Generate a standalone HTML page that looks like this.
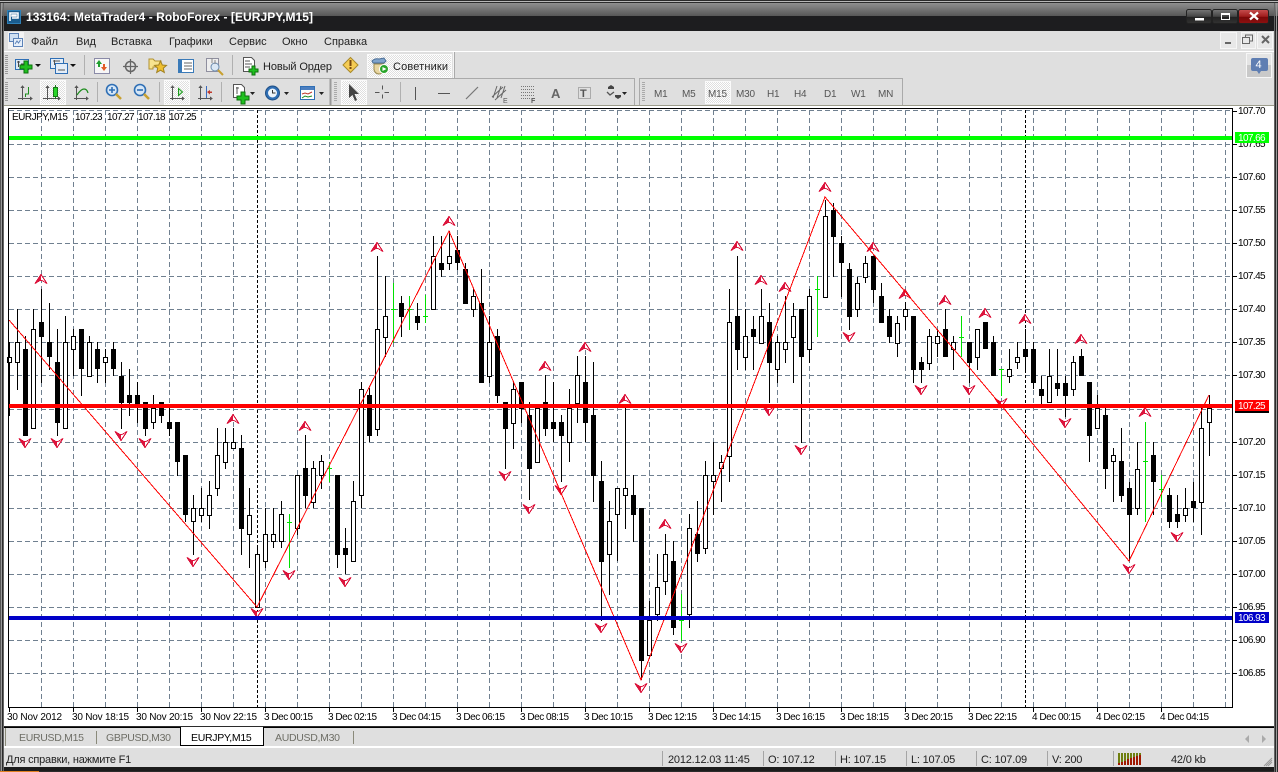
<!DOCTYPE html>
<html><head><meta charset="utf-8"><title>MetaTrader4</title>
<style>
html,body{margin:0;padding:0;background:#222;width:1278px;height:772px;overflow:hidden}
svg{position:absolute;left:0;top:0;display:block}
text{font-family:"Liberation Sans","Noto Sans CJK SC",sans-serif;white-space:pre}
.m{font-size:11px;fill:#222}
.p{font-size:10px;fill:#000;letter-spacing:-.6px}
.t{font-size:10px;fill:#000;letter-spacing:-.1px}
.tab{font-size:10.5px;fill:#6e6e66;letter-spacing:-.3px}
.s{font-size:11px;fill:#222;letter-spacing:-.2px}
.tf{font-size:10px;fill:#555;letter-spacing:-.2px}
.c{shape-rendering:crispEdges}
</style></head><body>
<svg width="1278" height="772" viewBox="0 0 1278 772">
<defs>
<linearGradient id="tg" x1="0" y1="0" x2="0" y2="1"><stop offset="0" stop-color="#8f8f8f"/><stop offset="1" stop-color="#575757"/></linearGradient>
<linearGradient id="bt" x1="0" y1="0" x2="0" y2="1"><stop offset="0" stop-color="#777"/><stop offset=".5" stop-color="#444"/><stop offset=".55" stop-color="#222"/><stop offset="1" stop-color="#333"/></linearGradient>
<linearGradient id="rd" x1="0" y1="0" x2="0" y2="1"><stop offset="0" stop-color="#c85050"/><stop offset=".5" stop-color="#a01c1c"/><stop offset=".55" stop-color="#7c0808"/><stop offset="1" stop-color="#8c1010"/></linearGradient>
<pattern id="ck" width="2" height="2" patternUnits="userSpaceOnUse"><rect width="2" height="2" fill="#fff"/><rect width="1" height="1" fill="#dfdfdf"/><rect x="1" y="1" width="1" height="1" fill="#dfdfdf"/></pattern>
<g id="u" shape-rendering="crispEdges"><path d="M-6 4.500L0-4.500L6 4.500L1 1.500H-1Z" fill="#fff" stroke="#dc143c"/><path d="M-6 4.500L0-4.500V1.500H-1Z" fill="#dc143c"/></g>
<g id="d" shape-rendering="crispEdges"><path d="M-6-4.500L0 4.500L6-4.500L1-1.500H-1Z" fill="#fff" stroke="#dc143c"/><path d="M-6-4.500L0 4.500V-1.500H-1Z" fill="#dc143c"/></g>
</defs>

<!-- window frame -->
<rect width="1278" height="772" fill="#2b2b2b"/>
<rect x="0" y="1" width="1278" height="1" fill="#b8b8b8"/>
<rect x="0" y="3" width="1278" height="13" fill="url(#tg)"/>
<rect x="0" y="16" width="1278" height="15" fill="#1d1d1f"/>
<rect x="0" y="3" width="1" height="769" fill="#555"/><rect x="1" y="3" width="1" height="769" fill="#999"/><rect x="3" y="3" width="1" height="769" fill="#666"/>
<rect x="1274" y="3" width="1" height="769" fill="#666"/><rect x="1276" y="3" width="1" height="769" fill="#999"/>
<rect x="0" y="771" width="39" height="1" fill="#e08020"/>

<!-- logo -->
<rect x="7" y="10" width="14" height="14" fill="#2f7fb5"/><rect x="8" y="11" width="12" height="12" fill="#1a5c8e"/>
<path d="M10 21V13h8v5h-6M12 15h4v1h-4z" fill="none" stroke="#fff" stroke-width="1.6"/>
<text x="26" y="21" font-size="12" font-weight="700" fill="#fff" textLength="287">133164: MetaTrader4 - RoboForex - [EURJPY,M15]</text>

<!-- window buttons -->
<rect x="1186.500" y="9.500" width="25" height="14" rx="2" fill="url(#bt)" stroke="#222"/>
<rect x="1212.500" y="9.500" width="25" height="14" rx="2" fill="url(#bt)" stroke="#222"/>
<rect x="1238.500" y="9.500" width="30" height="14" rx="2" fill="url(#rd)" stroke="#222"/>
<rect x="1195" y="18" width="9" height="2.500" fill="#fff"/>
<rect x="1221.500" y="13.500" width="8" height="6" fill="none" stroke="#fff"/><rect x="1221" y="13" width="9" height="2" fill="#fff"/>
<path d="M1250 12.500l8 7M1258 12.500l-8 7" stroke="#fff" stroke-width="2.200"/>

<!-- menu + toolbars bg -->
<rect x="4" y="31" width="1270" height="75" fill="#dfdfdf"/>
<rect x="4" y="51" width="1270" height="1" fill="#fff"/>
<rect x="4" y="105" width="1270" height="1" fill="#9c9c8c"/>
<!-- mdi icon -->
<rect x="8" y="32" width="16" height="17" fill="#f3f3f3"/>
<rect x="9.500" y="33.500" width="9" height="8" fill="#cfe0f3" stroke="#5b82b8"/><rect x="13.500" y="38.500" width="9" height="8" fill="#e6effa" stroke="#5b82b8"/><path d="M15 44l2-3 1.500 2 2-3" fill="none" stroke="#5b82b8"/>
<text class="m" x="31" y="45">Файл</text>
<text class="m" x="76" y="45">Вид</text>
<text class="m" x="111" y="45">Вставка</text>
<text class="m" x="169" y="45">Графики</text>
<text class="m" x="229" y="45">Сервис</text>
<text class="m" x="282" y="45">Окно</text>
<text class="m" x="324" y="45">Справка</text>
<!-- mdi controls -->
<g class="c"><rect x="1220.500" y="32.500" width="16" height="16" fill="#e8e8e8" stroke="#f6f6f6"/><rect x="1241.500" y="32.500" width="14" height="16" fill="#e8e8e8" stroke="#f6f6f6"/><rect x="1257.500" y="32.500" width="15" height="16" fill="#e8e8e8" stroke="#f6f6f6"/>
<rect x="1225" y="42" width="6" height="2" fill="#666"/>
<rect x="1242.500" y="37.500" width="7" height="6" fill="none" stroke="#666"/><path d="M1245.500 37.500v-2.500h7v6h-3" fill="none" stroke="#666"/></g>
<path d="M1262 36l7 7M1269 36l-7 7" stroke="#666" stroke-width="2"/>
<!-- notify -->
<rect x="1246.500" y="53.500" width="25" height="24" fill="#e4e4e4" stroke="#f6f6f6"/>
<rect x="1247" y="65" width="24" height="12" fill="#c9c9c9"/>
<path d="M1253 58h13q2 0 2 2v9q0 2-2 2h-5l-2 3-2-3h-4q-2 0-2-2v-9q0-2 2-2z" fill="#5f7eb2"/>
<text x="1255.500" y="68" font-size="11" fill="#fff">4</text>

<!-- toolbar borders -->
<g class="c">
<path d="M6 78.500H634.500V105" fill="none" stroke="#aaa"/>
<path d="M639.500 105V78.500H902.500V105" fill="none" stroke="#aaa"/>
<path d="M453.500 52V78" stroke="#f5f5f5"/>
<path d="M454.500 52V78" stroke="#aaa"/>
<path d="M6.500 55v20M6.500 82v20" stroke="#999" stroke-dasharray="1 1" stroke-width="3"/>
<path d="M84.500 55v20M232.500 55v20M97.500 82v20M159.500 82v20M221.500 82v20M400.500 82v20" stroke="#b0b0b0"/>
<path d="M330.500 79v26" stroke="#999" stroke-width="2"/>
<path d="M335.500 82v20M643.500 82v20" stroke="#aaa" stroke-dasharray="1 1" stroke-width="3"/>
<!-- pressed buttons -->
<rect x="367.500" y="54.500" width="84" height="23" fill="url(#ck)" stroke="#fafafa"/>
<rect x="40.500" y="80.500" width="25" height="24" fill="url(#ck)" stroke="#fafafa"/>
<rect x="164.500" y="80.500" width="25" height="24" fill="url(#ck)" stroke="#fafafa"/>
<rect x="341.500" y="80.500" width="25" height="24" fill="url(#ck)" stroke="#fafafa"/>
<rect x="705.500" y="81.500" width="25" height="22" fill="url(#ck)" stroke="#fafafa"/>
</g>

<!-- row 1 icons -->
<rect x="15.500" y="59.500" width="13" height="10" fill="#dce8f5" stroke="#2f6fb5"/><path d="M18.500 61v6M17 62h3M21 64h5" stroke="#444" class="c"/>
<path d="M24 61h4v4h4v4h-4v4h-4v-4h-4v-4h4z" fill="#1fc01f" stroke="#0d700d"/>
<path d="M35 64h6l-3 3z" fill="#111"/>
<rect x="50.500" y="58.500" width="13" height="10" fill="#e3edf8" stroke="#2f6fb5"/><rect x="55.500" y="63.500" width="12" height="10" fill="#e3edf8" stroke="#2f6fb5"/><path d="M53 61h7M54.500 60v5M58 70h7" stroke="#555" class="c"/>
<path d="M70 64h6l-3 3z" fill="#111"/>
<rect x="94.500" y="58.500" width="15" height="15" fill="#f7f7f7" stroke="#8b8ba8"/><path d="M99 60l3 4h-2v3h-2v-3h-2z" fill="#1f9f2f"/><path d="M104 71l-3-4h2v-3h2v3h2z" fill="#e25a25"/>
<circle cx="130.500" cy="66.500" r="5" fill="none" stroke="#666" stroke-width="1.500"/><path d="M130.500 59v15M123 66.500h15" stroke="#666" stroke-width="1.200"/>
<path d="M149 69v-10h4l2 2h6v6h-8v2z" fill="#f7e38e" stroke="#b09030"/><path d="M160.500 61l1.800 4 4.200.4-3.200 2.800 1 4.300-3.800-2.300-3.800 2.300 1-4.300-3.200-2.800 4.200-.4z" fill="#f0c030" stroke="#a08020"/>
<rect x="178.500" y="59.500" width="15" height="13" fill="#fff" stroke="#3a7ab8"/><rect x="179" y="60" width="3" height="12" fill="#3a7ab8"/><path d="M184 63h8M184 66h8M184 69h8" stroke="#666" class="c"/>
<rect x="206.500" y="58.500" width="12" height="13" fill="#eee" stroke="#8f8f9f"/><circle cx="215" cy="67" r="4" fill="#dbe8f5" stroke="#6c8cb0"/><path d="M218 70l5 5" stroke="#c8a030" stroke-width="2"/><path d="M212 58v5M215 60v4" stroke="#888"/>
<path d="M243.500 57.500h8l3 3v11h-11z" fill="#fff" stroke="#555"/><path d="M245 61h5M245 64h7M245 67h5" stroke="#555"/>
<path d="M252 66h3v3h3v3h-3v3h-3v-3h-3v-3h3z" fill="#1fc01f" stroke="#0d700d"/>
<text x="263" y="70" font-size="11" fill="#222" textLength="69">Новый Ордер</text>
<path d="M350.500 57.500l7.500 7.500-7.500 7.500-7.500-7.500z" fill="#f5cc55" stroke="#a98a2a"/><rect x="349.500" y="60" width="2" height="6" fill="#7a4a10"/><rect x="349.500" y="67" width="2" height="2" fill="#7a4a10"/>
<path d="M372 61q3-3 7-2l5-1 2 3-2 2H373z" fill="#7fa3cb" stroke="#4c6f97"/><path d="M374 64h10v5a5 5 0 0 1-10 0z" fill="#e9d6a0" stroke="#9a8a50"/><circle cx="384" cy="69" r="4.500" fill="#2aa52a" stroke="#fff"/><path d="M382.500 67l4 2-4 2z" fill="#fff"/>
<text x="393" y="70" font-size="11" fill="#222" textLength="55">Советники</text>

<!-- row 2 icons -->
<g fill="none" stroke="#555" class="c">
<path d="M22.500 86v14M18 98.500h14M21 88l1.500-2 1.500 2M30 97l2 1.500-2 1.500"/>
<path d="M47.500 86v14M43 98.500h17M46 88l1.500-2 1.500 2M58 97l2 1.500-2 1.500"/>
<path d="M76.500 86v14M74 98.500h14M75 88l1.500-2 1.500 2M86 97l2 1.500-2 1.500"/>
<path d="M172.500 86v14M170 98.500h14M171 88l1.500-2 1.500 2M182 97l2 1.500-2 1.500"/>
<path d="M200.500 86v14M198 98.500h14M199 88l1.500-2 1.500 2M210 97l2 1.500-2 1.500"/>
</g>
<path d="M28.500 87v7h-3v3" fill="none" stroke="#1c8c1c" class="c"/>
<rect x="53.500" y="87.500" width="4" height="9" fill="#29d629" stroke="#177a17" class="c"/><path d="M55.500 85v2M55.500 97v2" stroke="#177a17" class="c"/>
<path d="M77 95q4-6 7-6t4 4" fill="none" stroke="#1c8c1c" stroke-width="1.200"/>
<circle cx="112" cy="90" r="5.500" fill="#d6e7f7" stroke="#2f6fb5" stroke-width="1.600"/><path d="M109 90h6M112 87v6" stroke="#2f6fb5" stroke-width="1.600"/><path d="M116 94l5 5" stroke="#c8a030" stroke-width="2.500"/>
<circle cx="140" cy="90" r="5.500" fill="#d6e7f7" stroke="#2f6fb5" stroke-width="1.600"/><path d="M137 90h6" stroke="#2f6fb5" stroke-width="1.600"/><path d="M144 94l5 5" stroke="#c8a030" stroke-width="2.500"/>
<path d="M178.500 88.500l4 3.500-4 3.500z" fill="#cfeccf" stroke="#1a9a1a"/>
<path d="M206.500 86v12" stroke="#3a6cc0" class="c"/><path d="M207 92l3-2v1.500h2v1.500h-2v1.500z" fill="#c0392b"/>
<path d="M233.500 84.500h8l3 3v10h-11z" fill="#fff" stroke="#555"/><path d="M237 87v7M236 88h3" stroke="#555"/>
<path d="M241 92h4v4h4v4h-4v4h-4v-4h-4v-4h4z" fill="#1fc01f" stroke="#0d700d"/>
<path d="M250 92h5l-2.500 3z" fill="#222"/>
<circle cx="272.500" cy="93" r="7" fill="#2f6fb5" stroke="#204f85"/><circle cx="272.500" cy="93" r="4.500" fill="#eef4fa"/><path d="M272.500 90v3h3" fill="none" stroke="#333"/>
<path d="M284 92h5l-2.500 3z" fill="#222"/>
<rect x="300.500" y="86.500" width="14" height="13" fill="#fff" stroke="#2f6fb5"/><rect x="301" y="87" width="13" height="3" fill="#4c7fc0"/><path d="M302 94l3-1 3 1 4-2" fill="none" stroke="#c0392b"/><path d="M302 98l3-2 3 1 4-1" fill="none" stroke="#1c8c1c"/>
<path d="M319 92h5l-2.500 3z" fill="#222"/>
<path d="M349 84v14l3.500-3 2.500 6 2-1-2.500-6h4.500z" fill="#444"/>
<path d="M382.500 85.500v4M382.500 94.500v4M375 92.500h4.500M384.500 92.500h4.500" stroke="#555" class="c"/>
<path d="M415.500 87v13" stroke="#555" class="c"/>
<path d="M438 93.500h12" stroke="#555" class="c"/>
<path d="M466 99l12-12" stroke="#777" stroke-width="1.200"/>
<path d="M492 97l11-10M495 100l11-10M497 86l-4 12M501 86l-4 12M505 86l-4 12" stroke="#666" fill="none"/>
<text x="503" y="103" font-size="7" fill="#555">E</text>
<path d="M521 86.500h13M521 89.500h13M521 92.500h13M521 95.500h13M521 98.500h10" stroke="#777" stroke-dasharray="1 1"/>
<text x="531" y="103" font-size="7" font-weight="700" fill="#555">F</text>
<text x="551" y="98" font-size="13" font-weight="700" fill="#666">A</text>
<rect x="578.500" y="87.500" width="12" height="11" fill="none" stroke="#777" stroke-dasharray="1 1"/>
<text x="580" y="97" font-size="11" font-weight="700" fill="#555">T</text>
<path d="M608 87l3-2 3 2v2h-6zM615 97l3 2 3-2v-2h-6z" fill="#444"/><path d="M607 92l3 3 4-3" fill="none" stroke="#555" stroke-width="1.300"/>
<path d="M622 92h5l-2.500 3z" fill="#222"/>
<text class="tf" x="654" y="97">M1</text>
<text class="tf" x="682" y="97">M5</text>
<text class="tf" x="708" y="97">M15</text>
<text class="tf" x="736" y="97">M30</text>
<text class="tf" x="767" y="97">H1</text>
<text class="tf" x="794" y="97">H4</text>
<text class="tf" x="824" y="97">D1</text>
<text class="tf" x="851" y="97">W1</text>
<text class="tf" x="878" y="97">MN</text>

<!-- chart -->
<rect x="4" y="106" width="1270" height="620" fill="#fff"/>
<g class="c">
<g stroke="#708090" fill="none" stroke-dasharray="5 3">
<path d="M9 144.500H1232M9 177.500H1232M9 210.500H1232M9 243.500H1232M9 276.500H1232M9 309.500H1232M9 342.500H1232M9 375.500H1232M9 409.500H1232M9 442.500H1232M9 475.500H1232M9 508.500H1232M9 541.500H1232M9 574.500H1232M9 607.500H1232M9 640.500H1232M9 673.500H1232M9 110.500H1232"/>
<path d="M41.500 110V707M73.500 110V707M105.500 110V707M137.500 110V707M169.500 110V707M201.500 110V707M233.500 110V707M265.500 110V707M297.500 110V707M329.500 110V707M361.500 110V707M393.500 110V707M425.500 110V707M457.500 110V707M489.500 110V707M521.500 110V707M553.500 110V707M585.500 110V707M617.500 110V707M649.500 110V707M681.500 110V707M713.500 110V707M745.500 110V707M777.500 110V707M809.500 110V707M841.500 110V707M873.500 110V707M905.500 110V707M937.500 110V707M969.500 110V707M1001.500 110V707M1033.500 110V707M1065.500 110V707M1097.500 110V707M1129.500 110V707M1161.500 110V707M1193.500 110V707M1225.500 110V707"/>
</g>
<path d="M257.500 110V707M1025.500 110V707" stroke="#000" fill="none" stroke-dasharray="3 2"/>

<!-- wicks -->
<path stroke="#000" fill="none" d="M9.500 342V416M17.500 309V390M25.500 336V436M33.500 309V428M41.500 289V383M49.500 303V370M57.500 329V436M65.500 316V428M73.500 329V376M81.500 329V396M89.500 336V376M97.500 342V383M105.500 349V383M113.500 342V376M121.500 362V429M129.500 369V416M137.500 382V423M145.500 402V436M153.500 395V429M161.500 402V423M169.500 408V436M177.500 422V476M185.500 455V522M193.500 495V555M201.500 488V522M209.500 481V529M217.500 428V496M225.500 428V469M233.500 428V448M241.500 435V555M249.500 488V568M257.500 547V607M265.500 508V568M273.500 508V548M281.500 501V548M297.500 475V535M305.500 435V508M313.500 461V508M321.500 455V489M337.500 475V568M345.500 528V574M353.500 481V561M361.500 382V508M369.500 388V442M377.500 256V436M385.500 276V357M401.500 296V337M417.500 303V330M433.500 236V309M441.500 236V277M449.500 231V270M457.500 236V270M465.500 263V304M473.500 289V317M481.500 269V383M489.500 316V383M497.500 329V403M505.500 402V469M513.500 382V449M521.500 382V423M529.500 402V500M537.500 408V462M545.500 375V436M553.500 382V442M561.500 415V482M569.500 389V462M577.500 356V423M585.500 356V442M593.500 362V502M601.500 461V621M609.500 501V595M617.500 488V561M625.500 408V529M633.500 475V542M641.500 508V680M649.500 601V655M657.500 554V621M665.500 534V595M673.500 541V635M689.500 514V628M697.500 501V562M705.500 461V554M713.500 442V515M721.500 455V502M729.500 289V482M737.500 256V370M745.500 309V370M753.500 316V370M761.500 289V343M769.500 303V403M777.500 336V383M785.500 296V363M793.500 303V383M801.500 309V443M809.500 289V363M825.500 200V297M833.500 203V277M841.500 236V297M849.500 263V330M857.500 277V317M865.500 256V283M873.500 256V303M881.500 283V323M889.500 309V343M897.500 316V357M905.500 302V330M913.500 316V383M921.500 357V383M929.500 329V370M937.500 329V357M945.500 309V357M953.500 336V370M969.500 342V383M977.500 329V370M985.500 322V349M993.500 336V376M1009.500 349V383M1017.500 342V369M1025.500 329V370M1033.500 342V389M1041.500 376V405M1049.500 349V402M1057.500 349V396M1065.500 376V417M1073.500 356V396M1081.500 349V376M1089.500 382V462M1097.500 395V428M1105.500 408V489M1113.500 448V502M1121.500 428V502M1129.500 482V561M1137.500 442V515M1153.500 442V515M1169.500 488V528M1177.500 495V528M1185.500 488V522M1193.500 482V522M1201.500 408V535M1209.500 395V456"/>
<!-- green dojis -->
<path stroke="#00e000" fill="none" d="M289.500 514V568M287 522.500h5M329.500 462V482M327 468.500h5M393.500 283V343M391 309.500h5M409.500 296V330M407 309.500h5M425.500 295V323M423 316.500h5M681.500 594V641M679 620.500h5M817.500 276V337M815 289.500h5M961.500 316V357M959 337.500h5M1001.500 369V396M999 369.500h5M1145.500 422V522M1143 461.500h5M1161.500 475V502M1159 489.500h5"/>
<!-- white bodies -->
<path fill="#fff" stroke="#000" d="M7.500 357.500h4v5h-4zM15.500 342.500h4v20h-4zM31.500 329.500h4v99h-4zM63.500 342.500h4v86h-4zM71.500 336.500h4v13h-4zM87.500 342.500h4v34h-4zM103.500 357.500h4v5h-4zM151.500 408.500h4v14h-4zM191.500 508.500h4v13h-4zM199.500 508.500h4v7h-4zM207.500 495.500h4v20h-4zM215.500 455.500h4v33h-4zM223.500 442.500h4v20h-4zM231.500 442.500h4v6h-4zM247.500 515.500h4v19h-4zM255.500 554.500h4v53h-4zM263.500 534.500h4v27h-4zM271.500 534.500h4v7h-4zM279.500 514.500h4v27h-4zM295.500 475.500h4v53h-4zM311.500 468.500h4v34h-4zM319.500 461.500h4v14h-4zM351.500 501.500h4v60h-4zM359.500 389.500h4v106h-4zM375.500 329.500h4v100h-4zM383.500 316.500h4v21h-4zM431.500 256.500h4v53h-4zM447.500 256.500h4v7h-4zM471.500 296.500h4v13h-4zM487.500 342.500h4v34h-4zM511.500 389.500h4v34h-4zM535.500 408.500h4v54h-4zM567.500 408.500h4v34h-4zM575.500 375.500h4v28h-4zM607.500 521.500h4v33h-4zM615.500 488.500h4v26h-4zM623.500 488.500h4v7h-4zM647.500 620.500h4v35h-4zM655.500 587.500h4v27h-4zM663.500 554.500h4v27h-4zM687.500 528.500h4v86h-4zM703.500 475.500h4v73h-4zM711.500 475.500h4v6h-4zM719.500 462.500h4v6h-4zM727.500 322.500h4v134h-4zM743.500 336.500h4v21h-4zM759.500 316.500h4v27h-4zM775.500 342.500h4v27h-4zM783.500 342.500h4v7h-4zM791.500 316.500h4v21h-4zM807.500 296.500h4v53h-4zM823.500 216.500h4v81h-4zM855.500 283.500h4v26h-4zM863.500 263.500h4v14h-4zM895.500 323.500h4v20h-4zM903.500 309.500h4v7h-4zM927.500 336.500h4v27h-4zM935.500 336.500h4v7h-4zM951.500 342.500h4v7h-4zM975.500 329.500h4v28h-4zM1007.500 369.500h4v7h-4zM1015.500 357.500h4v5h-4zM1047.500 376.500h4v26h-4zM1071.500 362.500h4v27h-4zM1095.500 408.500h4v20h-4zM1111.500 455.500h4v6h-4zM1135.500 469.500h4v39h-4zM1183.500 508.500h4v7h-4zM1199.500 428.500h4v74h-4zM1207.500 408.500h4v14h-4z"/>
<!-- black bodies -->
<path fill="#000" d="M23 349h5v87h-5zM39 322h5v15h-5zM47 342h5v15h-5zM55 362h5v61h-5zM79 329h5v40h-5zM95 349h5v20h-5zM111 349h5v20h-5zM119 376h5v27h-5zM127 395h5v8h-5zM135 395h5v13h-5zM143 402h5v27h-5zM159 402h5v14h-5zM167 422h5v7h-5zM175 422h5v40h-5zM183 455h5v60h-5zM239 448h5v81h-5zM303 468h5v28h-5zM335 475h5v80h-5zM343 548h5v7h-5zM367 395h5v41h-5zM399 303h5v14h-5zM415 316h5v7h-5zM439 263h5v7h-5zM455 250h5v13h-5zM463 269h5v35h-5zM479 303h5v80h-5zM495 336h5v60h-5zM503 402h5v27h-5zM519 382h5v27h-5zM527 415h5v54h-5zM543 402h5v27h-5zM551 422h5v7h-5zM559 422h5v14h-5zM583 382h5v41h-5zM591 415h5v61h-5zM599 481h5v81h-5zM631 495h5v20h-5zM639 508h5v153h-5zM671 561h5v67h-5zM695 534h5v20h-5zM735 316h5v34h-5zM751 329h5v8h-5zM767 322h5v41h-5zM799 309h5v48h-5zM831 210h5v27h-5zM839 243h5v20h-5zM847 269h5v48h-5zM871 256h5v34h-5zM879 296h5v27h-5zM887 316h5v21h-5zM911 316h5v54h-5zM919 362h5v8h-5zM943 329h5v28h-5zM967 342h5v21h-5zM983 322h5v27h-5zM991 342h5v34h-5zM1023 349h5v8h-5zM1031 349h5v34h-5zM1039 389h5v7h-5zM1055 383h5v6h-5zM1063 383h5v13h-5zM1079 356h5v20h-5zM1087 382h5v54h-5zM1103 415h5v54h-5zM1119 461h5v35h-5zM1127 488h5v27h-5zM1151 455h5v27h-5zM1167 495h5v27h-5zM1175 514h5v8h-5zM1191 501h5v7h-5z"/>
</g>

<!-- arrows -->
<use href="#u" x="41" y="279"/><use href="#u" x="233" y="419"/><use href="#u" x="305" y="426"/><use href="#u" x="377" y="247"/><use href="#u" x="449" y="221"/><use href="#u" x="545" y="366"/><use href="#u" x="585" y="347"/><use href="#u" x="625" y="399"/><use href="#u" x="665" y="524"/><use href="#u" x="737" y="246"/><use href="#u" x="761" y="280"/><use href="#u" x="785" y="287"/><use href="#u" x="825" y="187"/><use href="#u" x="873" y="247"/><use href="#u" x="905" y="294"/><use href="#u" x="945" y="300"/><use href="#u" x="985" y="313"/><use href="#u" x="1025" y="319"/><use href="#u" x="1081" y="339"/><use href="#u" x="1145" y="412"/>
<use href="#d" x="25" y="443"/><use href="#d" x="57" y="443"/><use href="#d" x="121" y="436"/><use href="#d" x="145" y="443"/><use href="#d" x="193" y="562"/><use href="#d" x="257" y="613"/><use href="#d" x="289" y="575"/><use href="#d" x="345" y="582"/><use href="#d" x="505" y="476"/><use href="#d" x="529" y="509"/><use href="#d" x="561" y="490"/><use href="#d" x="601" y="628"/><use href="#d" x="641" y="688"/><use href="#d" x="681" y="648"/><use href="#d" x="769" y="411"/><use href="#d" x="801" y="450"/><use href="#d" x="849" y="337"/><use href="#d" x="921" y="390"/><use href="#d" x="969" y="390"/><use href="#d" x="1001" y="403"/><use href="#d" x="1065" y="423"/><use href="#d" x="1129" y="569"/><use href="#d" x="1177" y="537"/>

<g class="c">
<!-- zigzag -->
<polyline fill="none" stroke="#f00" points="9,320 257,607 449,231 641,680 825,197 1001,405 1129,561 1209,395"/>
<!-- h lines -->
<rect x="9" y="136" width="1223" height="4" fill="#0f0"/>
<rect x="9" y="404" width="1223" height="4" fill="#f00"/>
<rect x="9" y="616" width="1223" height="4" fill="#0000c8"/>
<!-- frame -->
<path d="M8.500 108.500V707.500H1232.500V108.500H8.500" fill="none" stroke="#000"/>
<path d="M1233 111.500h4M1233 144.500h4M1233 177.500h4M1233 210.500h4M1233 243.500h4M1233 276.500h4M1233 309.500h4M1233 342.500h4M1233 375.500h4M1233 442.500h4M1233 475.500h4M1233 508.500h4M1233 541.500h4M1233 574.500h4M1233 607.500h4M1233 640.500h4M1233 673.500h4" stroke="#000"/>
<path d="M9.500 708v4M73.500 708v4M137.500 708v4M201.500 708v4M265.500 708v4M329.500 708v4M393.500 708v4M457.500 708v4M521.500 708v4M585.500 708v4M649.500 708v4M713.500 708v4M777.500 708v4M841.500 708v4M905.500 708v4M969.500 708v4M1033.500 708v4M1097.500 708v4M1161.500 708v4" stroke="#000"/>
</g>
<text class="p" x="1238" y="114">107.70</text>
<text class="p" x="1238" y="147">107.65</text>
<text class="p" x="1238" y="180">107.60</text>
<text class="p" x="1238" y="213">107.55</text>
<text class="p" x="1238" y="246">107.50</text>
<text class="p" x="1238" y="279">107.45</text>
<text class="p" x="1238" y="312">107.40</text>
<text class="p" x="1238" y="345">107.35</text>
<text class="p" x="1238" y="378">107.30</text>
<text class="p" x="1238" y="445">107.20</text>
<text class="p" x="1238" y="478">107.15</text>
<text class="p" x="1238" y="511">107.10</text>
<text class="p" x="1238" y="544">107.05</text>
<text class="p" x="1238" y="577">107.00</text>
<text class="p" x="1238" y="610">106.95</text>
<text class="p" x="1238" y="643">106.90</text>
<text class="p" x="1238" y="676">106.85</text>
<rect x="1235" y="132" width="34" height="11" fill="#0f0" class="c"/><text class="p" x="1238" y="141" style="fill:#fff">107.66</text>
<rect x="1235" y="400" width="34" height="11" fill="#f00" class="c"/><rect x="1235" y="411" width="34" height="2" fill="#000" class="c"/><text class="p" x="1238" y="409" style="fill:#fff">107.25</text>
<rect x="1235" y="612" width="34" height="11" fill="#0000c8" class="c"/><text class="p" x="1238" y="621" style="fill:#fff">106.93</text>

<text class="p" x="12" y="120" style="letter-spacing:-.5px">EURJPY,M15</text>
<text class="p" x="75" y="120">107.23</text><text class="p" x="107" y="120">107.27</text><text class="p" x="138" y="120">107.18</text><text class="p" x="169" y="120">107.25</text>

<text class="t" x="7" y="720" textLength="55">30 Nov 2012</text>
<text class="t" x="72" y="720" textLength="57">30 Nov 18:15</text>
<text class="t" x="136" y="720" textLength="57">30 Nov 20:15</text>
<text class="t" x="200" y="720" textLength="57">30 Nov 22:15</text>
<text class="t" x="264" y="720" textLength="49">3 Dec 00:15</text>
<text class="t" x="328" y="720" textLength="49">3 Dec 02:15</text>
<text class="t" x="392" y="720" textLength="49">3 Dec 04:15</text>
<text class="t" x="456" y="720" textLength="49">3 Dec 06:15</text>
<text class="t" x="520" y="720" textLength="49">3 Dec 08:15</text>
<text class="t" x="584" y="720" textLength="49">3 Dec 10:15</text>
<text class="t" x="648" y="720" textLength="49">3 Dec 12:15</text>
<text class="t" x="712" y="720" textLength="49">3 Dec 14:15</text>
<text class="t" x="776" y="720" textLength="49">3 Dec 16:15</text>
<text class="t" x="840" y="720" textLength="49">3 Dec 18:15</text>
<text class="t" x="904" y="720" textLength="49">3 Dec 20:15</text>
<text class="t" x="968" y="720" textLength="49">3 Dec 22:15</text>
<text class="t" x="1032" y="720" textLength="49">4 Dec 00:15</text>
<text class="t" x="1096" y="720" textLength="49">4 Dec 02:15</text>
<text class="t" x="1160" y="720" textLength="49">4 Dec 04:15</text>

<!-- tabs -->
<rect x="4" y="727" width="1270" height="40" fill="#dfdfdf"/>
<g class="c">
<rect x="4" y="727" width="1270" height="1" fill="#000"/>
<rect x="4" y="746" width="1270" height="2" fill="#fff"/>
<path d="M96.500 731v13M353.500 731v13" stroke="#8a8a7a"/>
<path d="M180.500 727V745.500H263.500V727" fill="#fff" stroke="#000"/>
<rect x="181" y="727" width="82" height="18" fill="#fff"/>
<path d="M5.500 728v18" stroke="#8a8a7a"/>
</g>
<text class="tab" x="19" y="741">EURUSD,M15</text>
<text class="tab" x="106" y="741">GBPUSD,M30</text>
<text class="tab" x="191" y="741" style="fill:#000">EURJPY,M15</text>
<text class="tab" x="275" y="741">AUDUSD,M30</text>
<path d="M1249 735v8l-4-4zM1262 735v8l4-4z" fill="#aaa"/>

<!-- status -->
<text class="s" x="6" y="763">Для справки, нажмите F1</text>
<g class="c"><path d="M662.500 751v15M763.500 751v15M835.500 751v15M906.500 751v15M976.500 751v15M1047.500 751v15M1113.500 751v15" stroke="#a5a5a5"/></g>
<text class="s" x="668" y="763">2012.12.03 11:45</text>
<text class="s" x="768" y="763">O: 107.12</text>
<text class="s" x="840" y="763">H: 107.15</text>
<text class="s" x="911" y="763">L: 107.05</text>
<text class="s" x="981" y="763">C: 107.09</text>
<text class="s" x="1052" y="763">V: 200</text>
<text class="s" x="1171" y="763">42/0 kb</text>
<g class="c">
<rect x="1118" y="753" width="23" height="12" fill="#6f7f10"/>
<path d="M1120.500 753v12M1123.500 753v12M1126.500 753v12M1129.500 753v12M1132.500 753v12M1135.500 753v12M1138.500 753v12" stroke="#dfdfdf"/>
<path d="M1118 765v-2h2v2zM1121 765v-3h2v3zM1124 765v-4h2v4zM1127 765v-6h2v6zM1130 765v-7h2v7zM1133 765v-8h2v8zM1136 765v-9h2v9zM1139 765v-10h2v10z" fill="#a01800"/>
</g>
<path d="M1264 766l8-8M1268 766l4-4M1266 766l6-6" stroke="#999"/>
<rect x="4" y="767" width="1270" height="4" fill="#1c1c1c"/>
</svg>
</body></html>
